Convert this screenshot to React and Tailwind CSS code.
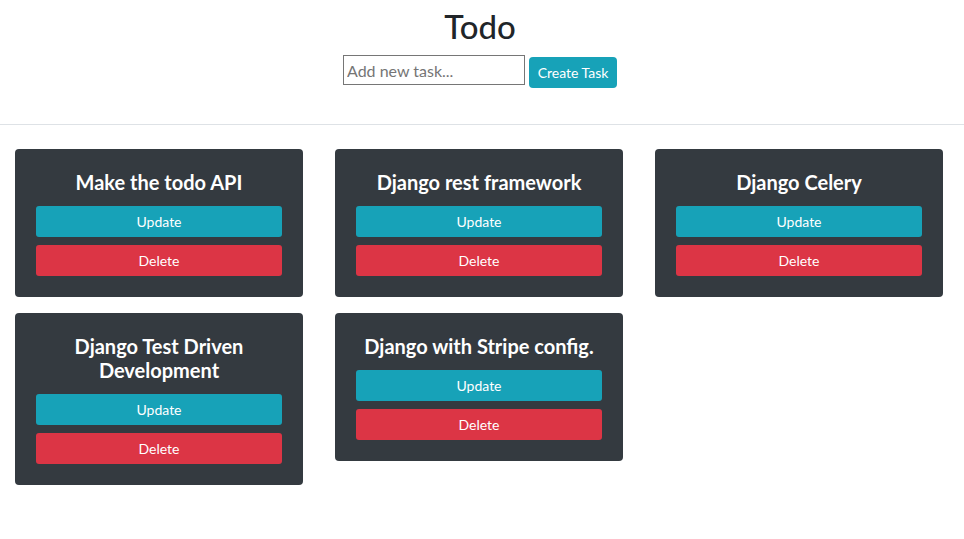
import React from "react";

const tasks = [
  "Make the todo API",
  "Django rest framework",
  "Django Celery",
  "Django Test Driven Development",
  "Django with Stripe config.",
];

export default function App() {
  return (
    <div className="min-h-[539px] bg-white text-[#212529]" style={{ fontFamily: 'Lato, "Noto Sans", sans-serif' }}>
      <div className="flex flex-col items-center pt-[6px] pr-[4px]">
        <h1 className="text-[33px] leading-[41px] font-medium text-[#212529]">Todo</h1>
        <div className="mt-[8px] flex items-start gap-[4px]">
          <input
            className="h-[30px] w-[182px] border border-[#767676] px-[3px] text-[16px] text-[#212529] placeholder:text-[#757575] outline-none"
            placeholder="Add new task..."
          />
          <button className="mt-[2px] h-[31px] w-[88px] rounded-[4px] bg-[#17a2b8] text-[14px] text-white">
            Create Task
          </button>
        </div>
      </div>
      <div className="mt-[36px] border-t border-[#dee2e6]" />
      <div className="grid grid-cols-[repeat(3,288px)] items-start gap-x-[32px] gap-y-[16px] pl-[15px] pt-[24px]">
        {tasks.map((t) => (
          <div key={t} className="rounded-[4px] bg-[#343a40] px-[21px] py-[21px]">
            <h3 className="text-center text-[20px] leading-[24px] font-bold text-white">{t}</h3>
            <div className="mt-[12px] flex flex-col gap-[8px]">
              <button className="h-[31px] rounded-[3px] bg-[#17a2b8] text-[14px] text-white">Update</button>
              <button className="h-[31px] rounded-[3px] bg-[#dc3545] text-[14px] text-white">Delete</button>
            </div>
          </div>
        ))}
      </div>
    </div>
  );
}
